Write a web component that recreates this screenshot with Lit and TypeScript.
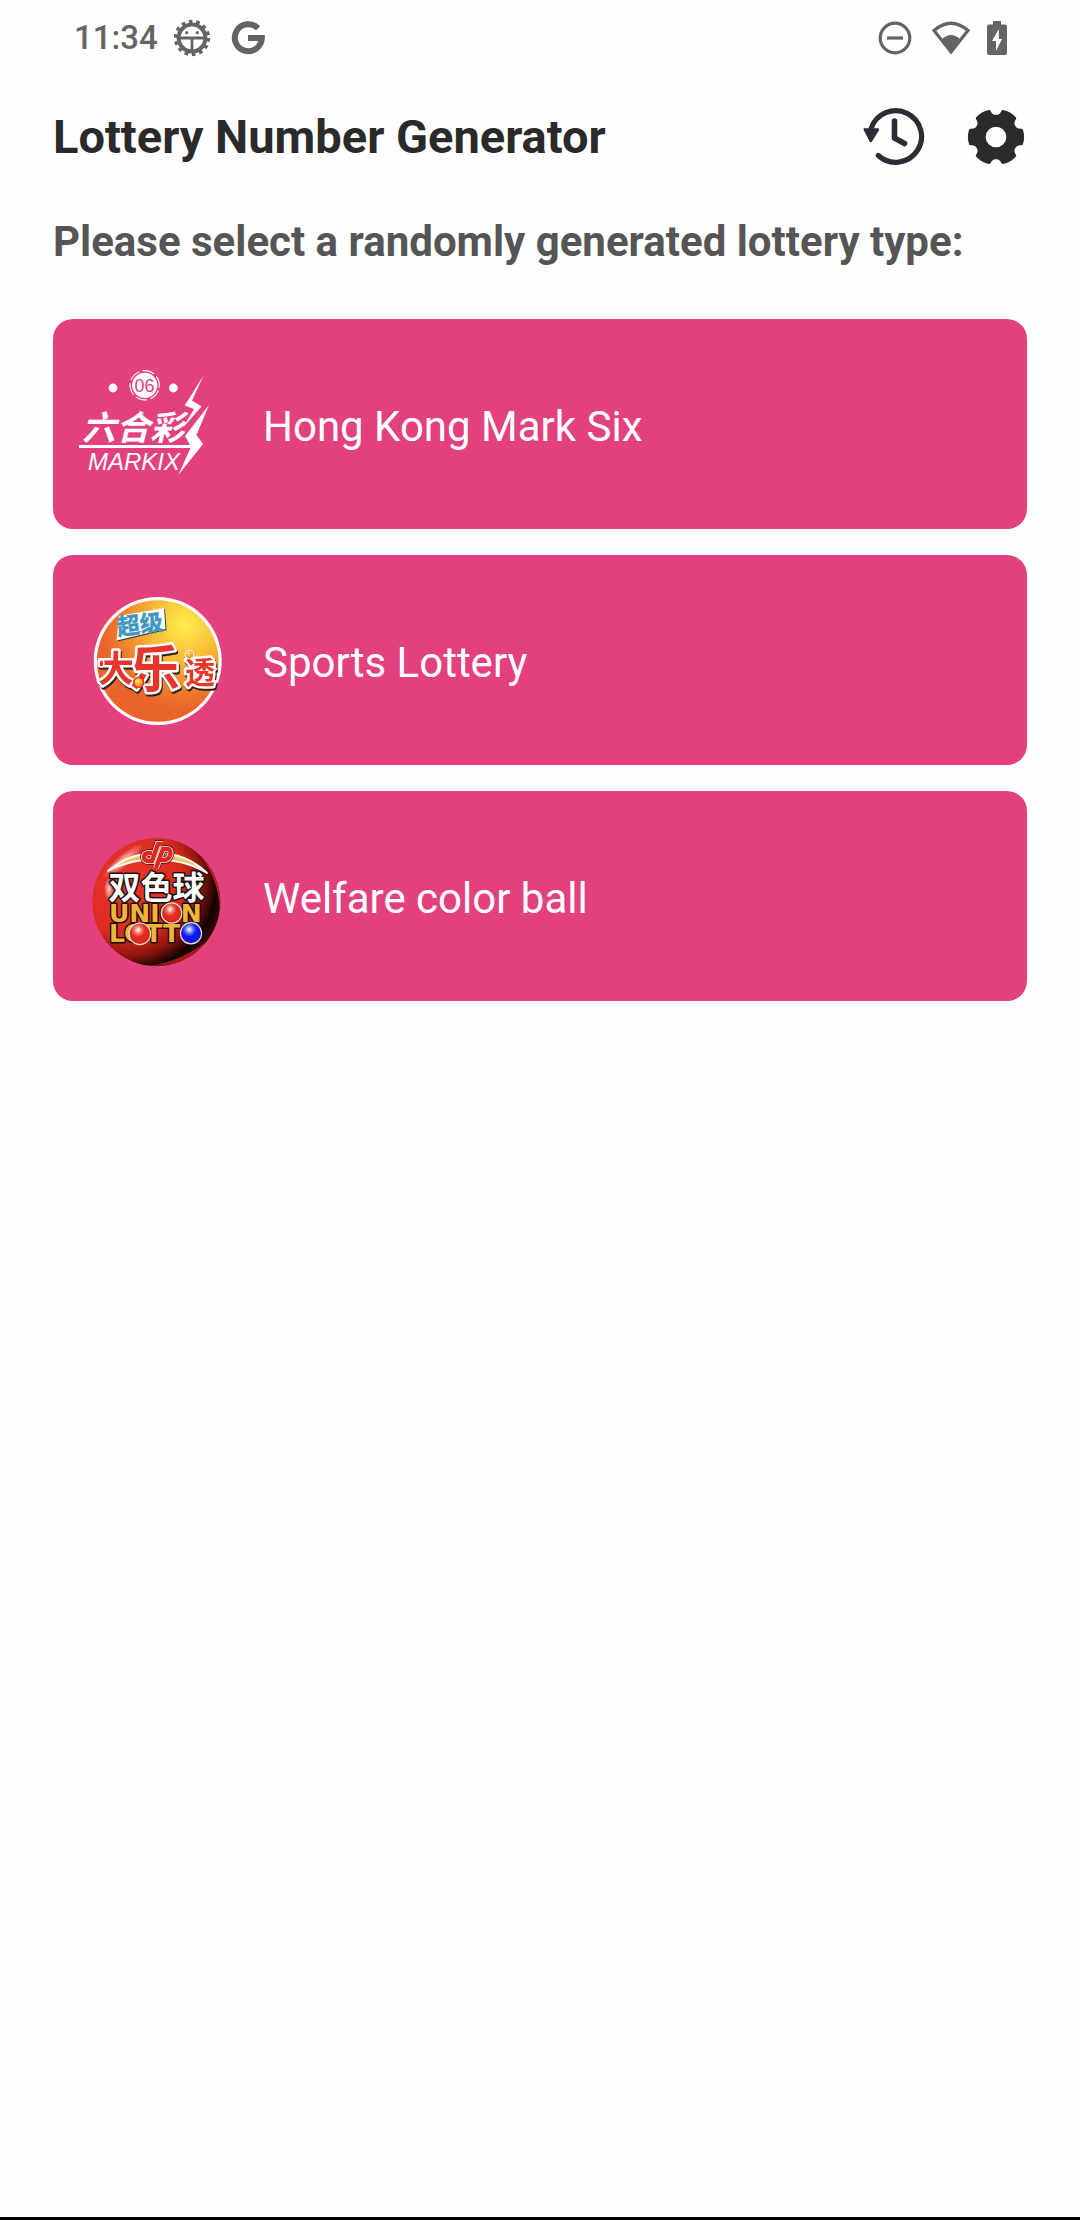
import { LitElement, html, svg, css } from "lit";
import { customElement } from "lit/decorators.js";

const point = (radius: number, degrees: number): string => {
  const a = (degrees * Math.PI) / 180;
  return `${(30 + radius * Math.cos(a)).toFixed(2)} ${(30 + radius * Math.sin(a)).toFixed(2)}`;
};

// Six rounded teeth around a centre hole.
const gearPath = (): string => {
  const parts: string[] = [];
  for (let k = 0; k < 6; k++) {
    const a = k * 60;
    parts.push(
      `${k === 0 ? "M" : "L"}${point(25.5, a - 15)}`,
      `Q${point(26.8, a)} ${point(25.5, a + 15)}`,
      `Q${point(20, a + 18)} ${point(20, a + 30)}`,
      `Q${point(20, a + 42)} ${point(25.5, a + 45)}`
    );
  }
  return `${parts.join(" ")} Z M41.5 30 A11.5 11.5 0 1 0 18.5 30 A11.5 11.5 0 1 0 41.5 30 Z`;
};

const markSixLogo = svg`
  <svg class="logo" viewBox="0 0 158 158" aria-hidden="true">
    <g fill="#fff">
      <circle cx="34" cy="43" r="4.4"/>
      <circle cx="94.4" cy="43" r="4.4"/>
      <circle cx="65.7" cy="40.3" r="12.6"/>
      <circle cx="65.7" cy="40.3" r="14.6" fill="none" stroke="#fff" stroke-width="1.2" stroke-dasharray="12 3.3" transform="rotate(20 65.7 40.3)"/>
      <path d="M124.7 30.3 L113 55.5 L122.5 61.5 L103.7 83 L115 64 L105.7 60.5 Z"/>
      <path d="M130 60 L117.5 90 L124 99 L99.3 130 L112 102 L106 91 Z"/>
      <rect x="0" y="100" width="113" height="3"/>
    </g>
    <text class="cjk slant" x="3" y="95" font-size="34" fill="#fff">六合彩</text>
    <text class="sans" x="55.5" y="47" font-size="18" fill="#e2417d">06</text>
    <text class="sans slant" x="9" y="125" font-size="24" fill="#fff">MARKIX</text>
  </svg>`;

const sportsLogo = svg`
  <svg class="logo" viewBox="0 0 158 158" aria-hidden="true">
    <defs>
      <radialGradient id="sun" gradientUnits="userSpaceOnUse" cx="106" cy="44" r="84">
        <stop offset="0" stop-color="#ffee4e"/>
        <stop offset="0.4" stop-color="#f9bd38"/>
        <stop offset="0.8" stop-color="#ee7a2b"/>
        <stop offset="1" stop-color="#ea632b"/>
      </radialGradient>
      <radialGradient id="bead" cx="0.4" cy="0.35" r="0.7">
        <stop offset="0" stop-color="#ffe95a"/>
        <stop offset="1" stop-color="#ee7426"/>
      </radialGradient>
    </defs>
    <circle cx="78.7" cy="80" r="64" fill="#fff"/>
    <circle cx="78.7" cy="80" r="60.8" fill="url(#sun)"/>
    <path d="M41 36 L86 28 L87.5 49 L38.5 60.5 Z" fill="#3c3a36"/>
    <path d="M40 35 L85 27 L86.5 48 L37.5 59.5 Z" fill="#fff"/>
    <text class="cjk" x="39" y="54.5" font-size="23" fill="#3f96c5" stroke="#3f96c5" stroke-width="0.5" transform="rotate(-7 39 54)">超级</text>
    <g class="cjk lettering raised" fill="#e8352a" stroke="#fff" stroke-width="5" stroke-linejoin="round">
      <text x="19" y="101" font-size="36">大</text>
      <text x="106" y="102" font-size="30">透</text>
      <text x="51" y="106" font-size="50">乐</text>
    </g>
    <ellipse cx="22.5" cy="82.5" rx="2.4" ry="3.6" fill="#e8352a" stroke="#fff" stroke-width="1.4"/>
    <circle cx="59.6" cy="101.5" r="5" fill="url(#bead)" stroke="#e8352a" stroke-width="1.6"/>
    <circle cx="110.3" cy="73.5" r="4.2" fill="url(#bead)" stroke="#fff" stroke-width="1"/>
  </svg>`;

const emblem = "M73 36 H70 Q65 36 65 40 Q65 44 70 44 H73 L79 27 H84 M77 51 L84 32 H88 Q92 32 91.5 37 Q90 43 85 43 H81";

const unionLogo = svg`
  <svg class="logo" viewBox="0 0 158 158" aria-hidden="true">
    <defs>
      <radialGradient id="globe" gradientUnits="userSpaceOnUse" cx="48" cy="64" r="100">
        <stop offset="0" stop-color="#e8362b"/>
        <stop offset="0.55" stop-color="#dc2a20"/>
        <stop offset="0.75" stop-color="#8d150f"/>
        <stop offset="0.9" stop-color="#120202"/>
        <stop offset="1" stop-color="#3a0604"/>
      </radialGradient>
      <radialGradient id="shine" cx="0.5" cy="0.5" r="0.5">
        <stop offset="0" stop-color="#fff" stop-opacity="0.75"/>
        <stop offset="1" stop-color="#fff" stop-opacity="0"/>
      </radialGradient>
      <radialGradient id="redBall" cx="0.42" cy="0.32" r="0.65">
        <stop offset="0" stop-color="#fff"/>
        <stop offset="0.3" stop-color="#ee6a5c"/>
        <stop offset="0.5" stop-color="#e22d22"/>
        <stop offset="1" stop-color="#d8241b"/>
      </radialGradient>
      <radialGradient id="blueBall" cx="0.42" cy="0.32" r="0.65">
        <stop offset="0" stop-color="#fff"/>
        <stop offset="0.3" stop-color="#5a6cf6"/>
        <stop offset="0.5" stop-color="#0c1df2"/>
        <stop offset="1" stop-color="#0a14dc"/>
      </radialGradient>
    </defs>
    <circle cx="77.3" cy="85" r="64" fill="url(#globe)"/>
    <path d="M72 148.6 A64 64 0 0 0 128 124 Q103 144 72 148.6Z" fill="#c9231b" opacity="0.75"/>
    <path d="M122 39 A64 64 0 0 1 141 92 Q139 62 122 39Z" fill="#d92a21" opacity="0.8"/>
    <ellipse cx="44" cy="44" rx="26" ry="6.5" fill="url(#shine)" transform="rotate(-40 44 44)"/>
    <ellipse cx="30" cy="72" rx="5" ry="12" fill="url(#shine)"/>
    <path d="M29 54 Q50 36 78 36 Q107 36 128 56 Q107 43 78 42.5 Q50 42 29 54Z" fill="#f1c558" stroke="#fff" stroke-width="1.8" stroke-linejoin="round"/>
    <g fill="none">
      <path d=${emblem} stroke="#3b1210" stroke-width="7.6"/>
      <path d=${emblem} stroke="#f6e9e4" stroke-width="6.2"/>
      <path d=${emblem} stroke="#e0281f" stroke-width="4.4"/>
    </g>
    <text class="cjk lettering" x="29.5" y="82" font-size="32" fill="#fff" stroke="#161010" stroke-width="3" stroke-linejoin="round">双色球</text>
    <g class="wide lettering" fill="#eeb43c" stroke="#1d0d08" stroke-width="3" stroke-linejoin="round">
      <text x="30" y="105" font-size="25">UNION</text>
      <text x="30" y="125" font-size="25">LOTTO</text>
    </g>
    <g stroke="#f1dccb" stroke-width="1.2">
      <circle cx="92.6" cy="96" r="10.2" fill="url(#redBall)"/>
      <circle cx="60.8" cy="116.8" r="10.8" fill="url(#redBall)"/>
      <circle cx="112" cy="116.3" r="10.6" fill="url(#blueBall)"/>
    </g>
  </svg>`;

const lotteries = [
  { name: "Hong Kong Mark Six", logo: markSixLogo },
  { name: "Sports Lottery", logo: sportsLogo },
  { name: "Welfare color ball", logo: unionLogo },
];

@customElement("app-root")
export class AppRoot extends LitElement {
  static styles = css`
    :host {
      display: flex;
      flex-direction: column;
      min-height: 100vh;
      background: #fefefe;
      font-family: Roboto, "Noto Sans CJK SC", sans-serif;
      color: #2a2a2a;
    }
    svg {
      display: block;
      flex: none;
    }
    .status {
      display: flex;
      justify-content: space-between;
      align-items: center;
      height: 76px;
      padding: 0 72px 0 74px;
      color: #646464;
    }
    .group {
      display: flex;
      align-items: center;
      gap: 16px;
    }
    .time {
      font-size: 33px;
      line-height: 40px;
      font-weight: 500;
    }
    .glyph {
      width: 40px;
      height: 40px;
    }
    .narrow {
      width: 22px;
      height: 40px;
    }
    .bar {
      display: flex;
      align-items: center;
      justify-content: space-between;
      height: 122px;
      padding: 0 53px;
    }
    h1 {
      margin: 0;
      font-size: 47px;
      line-height: 56px;
      font-weight: 700;
    }
    .actions {
      display: flex;
      gap: 40px;
    }
    .action {
      border: 0;
      padding: 0;
      background: none;
      color: inherit;
      cursor: pointer;
    }
    .icon {
      width: 62px;
      height: 62px;
    }
    main {
      padding: 19px 53px 53px;
    }
    h2 {
      margin: 0 0 52px;
      font-size: 42px;
      line-height: 50px;
      font-weight: 700;
      color: #555;
    }
    .list {
      display: flex;
      flex-direction: column;
      gap: 26px;
      margin: 0;
      padding: 0;
      list-style: none;
    }
    .card {
      display: flex;
      align-items: center;
      gap: 26px;
      width: 100%;
      height: 210px;
      border: 0;
      border-radius: 20px;
      padding: 0 26px;
      background: #e2417d;
      color: #fff;
      font: 400 42px/50px Roboto, sans-serif;
      text-align: left;
      cursor: pointer;
    }
    .name {
      padding-top: 6px;
    }
    .logo {
      width: 158px;
      height: 158px;
    }
    .cjk {
      font-family: "Noto Sans CJK SC", sans-serif;
      font-weight: 700;
    }
    .sans {
      font-family: "Liberation Sans", sans-serif;
    }
    .wide {
      font-family: "DejaVu Sans", sans-serif;
      font-weight: 700;
    }
    .slant {
      font-style: italic;
    }
    .lettering {
      paint-order: stroke;
    }
    .raised {
      filter: drop-shadow(1px 2px 0 #2c211c);
    }
    .nav {
      height: 3px;
      margin-top: auto;
      background: #000;
    }
  `;

  render() {
    return html`
      <div class="status">
        <div class="group">
          <span class="time">11:34</span>
          <svg class="glyph" viewBox="0 0 40 40" aria-hidden="true">
            <circle cx="18" cy="20" r="16.2" fill="none" stroke="currentColor" stroke-width="4" stroke-dasharray="3.6 3.67"/>
            <circle cx="18" cy="20" r="13.4" fill="none" stroke="currentColor" stroke-width="4"/>
            <path d="M6 20 H30 M18 20 V32" stroke="currentColor" stroke-width="2.8"/>
            <circle cx="12.7" cy="14.7" r="1.6" fill="currentColor"/>
            <circle cx="23.3" cy="14.7" r="1.6" fill="currentColor"/>
          </svg>
          <svg class="glyph" viewBox="0 0 40 40" aria-hidden="true">
            <path d="M28 10.3 A13.5 13.5 0 1 0 31.8 20 H18" fill="none" stroke="currentColor" stroke-width="6"/>
          </svg>
        </div>
        <div class="group">
          <svg class="glyph" viewBox="0 0 40 40" aria-hidden="true">
            <circle cx="21" cy="20" r="14.8" fill="none" stroke="currentColor" stroke-width="3.2"/>
            <path d="M13 20 H29" stroke="currentColor" stroke-width="3.2"/>
          </svg>
          <svg class="glyph" viewBox="0 0 40 40" aria-hidden="true">
            <path d="M4 12.5 Q21 -2 38 12.5 L21 34 Z" fill="none" stroke="currentColor" stroke-width="3.2"/>
            <path d="M11.5 21.5 Q21 12.5 30.5 21.5 L21 34 Z" fill="currentColor"/>
          </svg>
          <svg class="narrow" viewBox="0 0 22 40" aria-hidden="true">
            <path fill="currentColor" fill-rule="evenodd" d="M7 3 H15 V6.5 H19 Q21 6.5 21 8.5 V35 Q21 37 19 37 H3 Q1 37 1 35 V8.5 Q1 6.5 3 6.5 H7 Z M12.8 11 L6 23 H10 V33 L16 21 H12.8 Z"/>
          </svg>
        </div>
      </div>

      <header class="bar">
        <h1>Lottery Number Generator</h1>
        <div class="actions">
          <button class="action" type="button" aria-label="History">
            <svg class="icon" viewBox="-1 0 62 62" aria-hidden="true">
              <g fill="none" stroke="#2b2d36" stroke-linecap="round" stroke-linejoin="round">
                <path d="M7.2 22.5 A25.8 25.8 0 1 1 14.3 49.5" stroke-width="5.2"/>
                <path d="M30.5 15 V32 L40.500 37.500" stroke-width="5.600"/>
                <path d="M0.8 23.500 H13.800 L6.800 35 Z" fill="#2b2d36" stroke-width="2.600"/>
              </g>
            </svg>
          </button>
          <button class="action" type="button" aria-label="Settings">
            <svg class="icon" viewBox="0 0 60 60" aria-hidden="true">
              <path d=${gearPath()} fill="#2b2b2b" fill-rule="evenodd" stroke="#2b2b2b" stroke-width="3" stroke-linejoin="round"/>
            </svg>
          </button>
        </div>
      </header>

      <main>
        <h2>Please select a randomly generated lottery type:</h2>
        <ul class="list">
          ${lotteries.map(
            (item) => html`
              <li>
                <button class="card" type="button">${item.logo}<span class="name">${item.name}</span></button>
              </li>
            `
          )}
        </ul>
      </main>

      <div class="nav"></div>
    `;
  }
}
